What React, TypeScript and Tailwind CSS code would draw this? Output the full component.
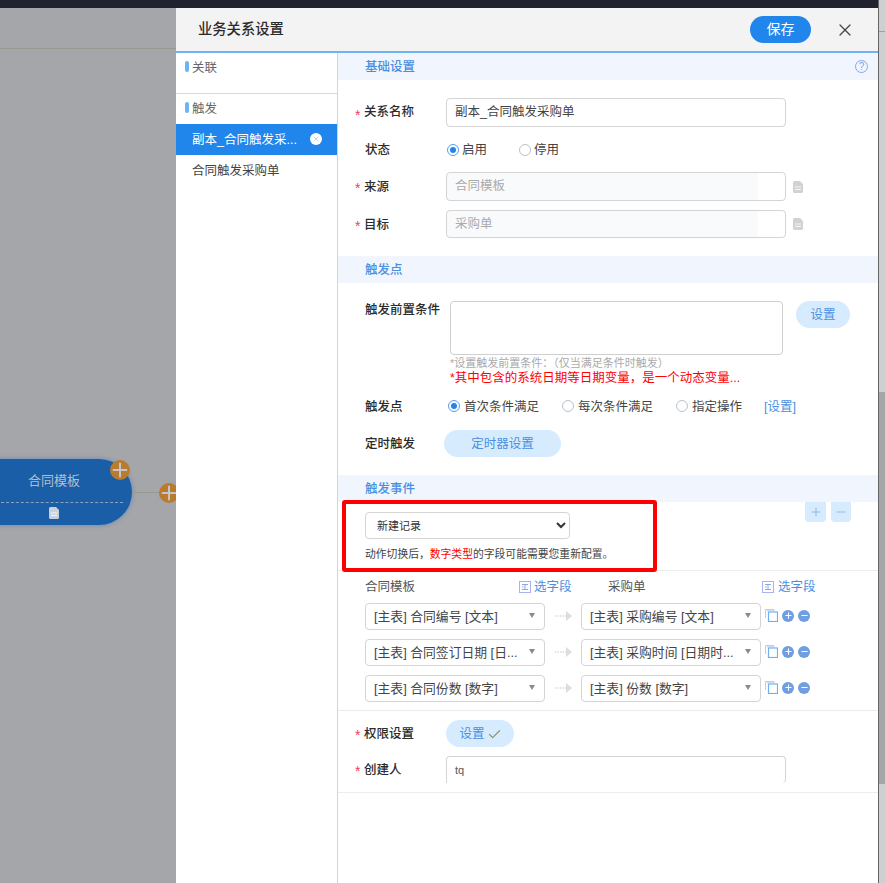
import React from 'react';
import { X, Check, Plus, Minus } from 'lucide-react';

const DocIcon = ({ color = '#d2d2d2' }: { color?: string }) => (
  <svg width="10" height="12" viewBox="0 0 10 12">
    <path d="M1.5 0H7l3 3v7.5A1.5 1.5 0 0 1 8.5 12h-7A1.5 1.5 0 0 1 0 10.5v-9A1.5 1.5 0 0 1 1.5 0z" fill={color} />
    <path d="M2 6h6M2 8.5h6" stroke="#fff" strokeWidth="0.8" />
  </svg>
);

const CopyIcon = () => (
  <svg width="13" height="13" viewBox="0 0 13 13" fill="none">
    <path d="M0.5 9V0.5H9" stroke="#b9cdf0" strokeWidth="1" />
    <path d="M1.8 1.8H10" stroke="#b9cdf0" strokeWidth="1" />
    <rect x="3.5" y="3" width="9" height="9.5" stroke="#6fb1f3" strokeWidth="1.2" fill="#fff" />
  </svg>
);

const FieldIcon = () => (
  <svg width="12" height="12" viewBox="0 0 12 12" fill="none">
    <rect x="0.5" y="0.5" width="11" height="11" stroke="#a9b4ee" />
    <path d="M3 3.5h6M6 3.5v5M3 8.5h6M3 6h1.5" stroke="#7d9fe6" strokeWidth="0.9" />
  </svg>
);

const RoundBtn = ({ minus }: { minus?: boolean }) => (
  <span className="flex h-3 w-3 items-center justify-center rounded-full bg-[#6f9fe0]">
    {minus ? <Minus size={9} strokeWidth={3} color="#fff" /> : <Plus size={9} strokeWidth={3} color="#fff" />}
  </span>
);

const Radio = ({ on }: { on?: boolean }) => (
  <span className={`flex h-3 w-3 items-center justify-center rounded-full border ${on ? 'border-[#5b9cf0]' : 'border-[#b9c4cc]'}`}>
    {on && <span className="h-1.5 w-1.5 rounded-full bg-[#2186eb]" />}
  </span>
);

const SectionTitle = ({ title, help }: { title: string; help?: boolean }) => (
  <div className="flex h-[27px] items-center justify-between bg-[#f1f6fe] pl-[27px] pr-[10px]">
    <span className="pt-[2px] text-[12.5px] font-medium text-[#4a8fe0]">{title}</span>
    {help && (
      <span className="flex h-[13px] w-[13px] items-center justify-center rounded-full border border-[#7fa8ec] text-[10px] leading-none text-[#7fa8ec]">?</span>
    )}
  </div>
);

const FormLabel = ({ text, required, className = '' }: { text: string; required?: boolean; className?: string }) => (
  <div className={`relative w-[81px] shrink-0 text-[12.5px] font-medium text-[#2b2b2b] ${className}`}>
    {required && <span className="absolute left-[-10px] top-[3px] text-[14px] font-normal leading-[18px] text-[#f2405c]">*</span>}
    <span className={required ? 'ml-[-1px]' : ''}>{text}</span>
  </div>
);

const MapSelect = ({ text }: { text: string }) => (
  <div className="flex h-[27px] w-[180px] items-center justify-between rounded border border-[#d4d4d4] bg-white pl-2 pr-[9px]">
    <span className="text-[12.8px] text-[#444]">{text}</span>
    <span className="mb-[2px] h-0 w-0 border-x-[3px] border-t-[5px] border-x-transparent border-t-[#8a8a8a]" />
  </div>
);

const Arrow = () => (
  <svg width="17" height="10" viewBox="0 0 17 10" fill="none" className="mb-[2px] ml-[10px] mr-[9px]">
    <path d="M0 5h11" stroke="#dddddd" strokeWidth="1.4" strokeDasharray="1.5 1" />
    <path d="M11 0 17 5l-6 5z" fill="#dddddd" />
  </svg>
);

const mapRows = [
  ['[主表] 合同编号 [文本]', '[主表] 采购编号 [文本]'],
  ['[主表] 合同签订日期 [日...', '[主表] 采购时间 [日期时...'],
  ['[主表] 合同份数 [数字]', '[主表] 份数 [数字]'],
];

export default function App() {
  return (
    <div className="flex h-[883px] w-[885px] overflow-hidden bg-[#a5a6a9] font-['Liberation_Sans','Noto_Sans_CJK_SC',sans-serif]">
      {/* canvas behind the drawer */}
      <div className="relative w-[176px] shrink-0 overflow-hidden">
        <div className="h-2 bg-[#1f2330]" />
        <div className="h-[41px] border-b border-[#98988f]" />
        <div className="absolute left-[-40px] top-[459px] flex h-[66px] w-[172px] flex-col items-center rounded-[33px] bg-[#1a5ea8] shadow-[0_0_5px_#5f88b8]">
          <span className="ml-[16px] mt-[12px] text-[13px] text-[#b4bec9]">合同模板</span>
          <span className="ml-[32px] mt-[11px] w-[122px] border-t border-dashed border-[#8aa3c0]" />
          <span className="ml-[16px] mt-[4px]"><DocIcon color="#c9d2dc" /></span>
        </div>
        <span className="absolute left-[110px] top-[460px] flex h-5 w-5 items-center justify-center rounded-full bg-[#b97b2d]">
          <Plus size={22} strokeWidth={2.2} color="#c4c6c9" className="shrink-0" />
        </span>
        <span className="absolute left-[132px] top-[492px] w-[28px] border-t border-[#98988f]" />
        <span className="absolute left-[159px] top-[483px] flex h-5 w-5 items-center justify-center rounded-full bg-[#b97b2d]">
          <Plus size={22} strokeWidth={2.2} color="#c4c6c9" className="shrink-0" />
        </span>
      </div>

      {/* drawer */}
      <div className="relative flex w-[702px] shrink-0 flex-col bg-white">
        <div className="h-2 bg-[#1f2330]" />
        <div className="flex h-[43px] items-center justify-between bg-[#f3f3f3] pl-[22px] pr-[23px]">
          <span className="text-[14.3px] font-medium text-[#2b2b2b]">业务关系设置</span>
          <div className="flex items-center gap-[24px]">
            <button className="h-[27px] w-[61px] rounded-[14px] bg-[#2186eb] text-[14px] text-white">保存</button>
            <X size={20} strokeWidth={1.5} color="#444" />
          </div>
        </div>
        <div className="h-[2px] bg-[#6db3f5]" />

        <div className="flex flex-1">
          {/* relation list */}
          <div className="w-[162px] shrink-0 border-r border-[#d4d4d4]">
            <div className="flex h-[41px] items-start gap-[3px] border-b border-[#d9d9d9] pl-[9px] pt-[4px]">
              <span className="mt-[4px] h-[11px] w-[4px] rounded-sm bg-[#6db3f5]" />
              <span className="mt-[2px] text-[12.5px] text-[#666]">关联</span>
            </div>
            <div className="flex h-[30px] items-start gap-[3px] pl-[9px] pt-[5px]">
              <span className="mt-[3px] h-[11px] w-[4px] rounded-sm bg-[#6db3f5]" />
              <span className="mt-[1px] text-[12.5px] text-[#666]">触发</span>
            </div>
            <div className="flex h-[31px] w-[161px] items-center justify-between bg-[#2186eb] pl-[16px] pr-[15px] text-[12.5px] text-white">
              <span className="pt-[2px]">副本_合同触发采...</span>
              <span className="mb-[2px] flex h-3 w-3 items-center justify-center rounded-full bg-white">
                <X size={8} color="#9cc4ee" />
              </span>
            </div>
            <div className="pl-[16px] pt-[7px] text-[12.5px] text-[#444]">合同触发采购单</div>
          </div>

          {/* form */}
          <div className="relative min-w-0 flex-1">
            <SectionTitle title="基础设置" help />
            <div className="pl-[27px]">
              <div className="mt-[18px] flex h-[29px] items-center">
                <FormLabel text="关系名称" required />
                <div className="flex h-[29px] w-[340px] items-center rounded border border-[#d4d4d4] px-2 text-[12.5px] text-[#444]">副本_合同触发采购单</div>
              </div>
              <div className="mt-[8px] flex h-[29px] items-center">
                <FormLabel text="状态" className="pt-[2px]" />
                <div className="ml-[1px] flex items-center gap-[3px] text-[12.5px] text-[#444]"><Radio on /><span className="pt-[2px]">启用</span></div>
                <div className="ml-[32px] flex items-center gap-[3px] text-[12.5px] text-[#444]"><Radio /><span className="pt-[2px]">停用</span></div>
              </div>
              <div className="mt-[8px] flex h-[29px] items-center">
                <FormLabel text="来源" required className="pt-[2px]" />
                <div className="flex h-[29px] w-[340px] items-center rounded border border-[#d4d4d4] bg-[linear-gradient(to_right,#f9fafc_311px,#fff_311px)] px-2 text-[12.5px] text-[#aaa]">合同模板</div>
                <span className="ml-[7px]"><DocIcon /></span>
              </div>
              <div className="mt-[9px] flex h-[28px] items-center">
                <FormLabel text="目标" required className="pt-[2px]" />
                <div className="flex h-[28px] w-[340px] items-center rounded border border-[#d4d4d4] bg-[linear-gradient(to_right,#f9fafc_311px,#fff_311px)] px-2 text-[12.5px] text-[#aaa]">采购单</div>
                <span className="ml-[7px]"><DocIcon /></span>
              </div>
            </div>

            <div className="mt-[18px]"><SectionTitle title="触发点" /></div>
            <div className="pl-[27px]">
              <div className="mt-[18px] flex items-start">
                <div className="w-[85px] shrink-0 text-[12.5px] font-medium text-[#2b2b2b]">触发前置条件</div>
                <div className="h-[54px] w-[333px] rounded border border-[#cfcfcf]" />
                <button className="ml-[13px] h-[27px] w-[54px] rounded-[14px] bg-[#d6ecfe] pt-[2px] text-[12.5px] text-[#4a8fe0]">设置</button>
              </div>
              <div className="ml-[85px] mt-[1px] text-[11px] leading-[14px] text-[#aaa]">*设置触发前置条件：（仅当满足条件时触发）</div>
              <div className="ml-[85px] mt-[1px] text-[12.5px] leading-[15px] text-[#f00]">*其中包含的系统日期等日期变量，是一个动态变量...</div>
              <div className="mt-[10px] flex h-[20px] items-center">
                <div className="w-[83px] shrink-0 pt-[2px] text-[12.5px] font-medium text-[#2b2b2b]">触发点</div>
                <div className="flex items-center gap-1 text-[12.5px] text-[#444]"><Radio on /><span className="pt-[2px]">首次条件满足</span></div>
                <div className="ml-[23px] flex items-center gap-1 text-[12.5px] text-[#444]"><Radio /><span className="pt-[2px]">每次条件满足</span></div>
                <div className="ml-[23px] flex items-center gap-1 text-[12.5px] text-[#444]"><Radio /><span className="pt-[2px]">指定操作</span></div>
                <span className="ml-[22px] pt-[2px] text-[12.5px] text-[#4a8fe0]">[设置]</span>
              </div>
              <div className="mt-[14px] flex h-[27px] items-center">
                <div className="w-[79px] shrink-0 pt-[2px] text-[12.5px] font-medium text-[#2b2b2b]">定时触发</div>
                <button className="h-[27px] w-[117px] rounded-[14px] bg-[#d6ecfe] pt-[2px] text-[12.5px] text-[#4a8fe0]">定时器设置</button>
              </div>
            </div>

            <div className="mt-[18px]"><SectionTitle title="触发事件" /></div>
            <div className="flex h-[69px] items-start justify-between border-b border-[#ececec] pl-[27px] pr-[27px]">
              <div>
                <select className="mt-[10px] h-[27px] w-[205px] rounded border border-[#d4d4d4] bg-white pl-[7px] text-[11px] text-[#333]">
                  <option>新建记录</option>
                </select>
                <div className="mt-[8px] text-[10.8px] leading-[14px] text-[#444]">
                  动作切换后，<span className="text-[#f00]">数字类型</span>的字段可能需要您重新配置。
                </div>
              </div>
              <div className="flex gap-[5px]">
                <span className="flex h-5 w-[21px] items-center justify-center rounded-b bg-[#d6ecfe]"><Plus size={14} strokeWidth={1.2} color="#7fa8d8" /></span>
                <span className="flex h-5 w-5 items-center justify-center rounded-b bg-[#d6ecfe]"><Minus size={14} strokeWidth={1.2} color="#7fa8d8" /></span>
              </div>
            </div>
            <div className="border-b border-[#ececec] pb-[8px] pl-[27px]">
              <div className="mb-[2px] flex h-[30px] items-center pt-[2px] text-[12.5px] text-[#555]">
                <span className="w-[154px]">合同模板</span>
                <span className="flex w-[89px] items-center gap-[3px] text-[#4a8fe0]"><FieldIcon />选字段</span>
                <span className="w-[154px]">采购单</span>
                <span className="flex items-center gap-[4px] text-[#4a8fe0]"><FieldIcon />选字段</span>
              </div>
              <div className="flex flex-col gap-[9px]">
                {mapRows.map((row) => (
                  <div key={row[0]} className="flex items-center">
                    <MapSelect text={row[0]} />
                    <Arrow />
                    <MapSelect text={row[1]} />
                    <span className="mb-[2px] ml-[4px]"><CopyIcon /></span>
                    <span className="mb-[2px] ml-[4px]"><RoundBtn /></span>
                    <span className="mb-[2px] ml-[4px]"><RoundBtn minus /></span>
                  </div>
                ))}
              </div>
            </div>
            <div className="border-b border-[#ececec] pb-[9px] pl-[27px]">
              <div className="mt-[9px] flex h-[27px] items-center">
                <FormLabel text="权限设置" required className="pt-[2px]" />
                <button className="flex h-[27px] w-[68px] items-center justify-center gap-[2px] rounded-[14px] bg-[#d6ecfe] pl-[1px] pt-[2px] text-[12.5px] text-[#4a8fe0]">
                  设置<Check size={15} strokeWidth={2} color="#8f9a5a" />
                </button>
              </div>
              <div className="mt-[9px] flex h-[27px] items-center">
                <FormLabel text="创建人" required className="pt-[2px]" />
                <div className="flex h-[27px] w-[340px] items-center rounded-t rounded-br border-x border-t border-[#d4d4d4] px-2 text-[11px] font-medium text-[#555]">tq</div>
              </div>
            </div>

            <div className="absolute left-[4px] top-[447px] h-[72px] w-[315px] rounded-[3px] border-4 border-[#f00]" />
          </div>
        </div>
      </div>

      {/* page scrollbar */}
      <div className="flex w-[7px] flex-col border-l border-[#666] bg-[#cfcfcf]">
        <div className="h-[32px] shrink-0 border-b border-[#a0a0a0]" />
        <div className="h-[360px] shrink-0" />
        <div className="h-[392px] shrink-0 bg-[#a6a6a6]" />
      </div>
    </div>
  );
}
